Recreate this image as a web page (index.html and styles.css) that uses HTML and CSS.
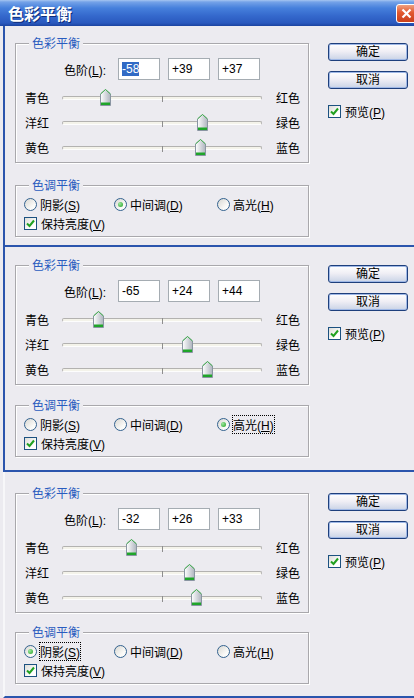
FILE: index.html
```html
<!DOCTYPE html>
<html lang="zh-CN">
<head>
  <meta charset="UTF-8" />
  <title>色彩平衡</title>
  <link rel="stylesheet" href="styles.css">
</head>
<body>
  <svg class="defs" aria-hidden="true">
    <defs>
      <linearGradient id="tg" x1="0" x2="1" y1="0" y2="0">
        <stop offset="0" stop-color="#ffffff"/>
        <stop offset="1" stop-color="#aeb4be"/>
      </linearGradient>
    </defs>
    <symbol id="thumb" viewBox="0 0 11 17">
      <path d="M5.5 0.5 L10.5 5 V16.5 H0.5 V5 Z" fill="url(#tg)" stroke="#8a95a2"/>
      <path d="M0.5 5 L5.5 0.5 L10.5 5" fill="none" stroke="#45b54f"/>
      <rect x="1" y="13.5" width="9" height="2.5" fill="#1fa52a"/>
    </symbol>
    <symbol id="tick" viewBox="0 0 11 11">
      <path d="M2 5.5 L4.5 8 L9 2.5" fill="none" stroke="#21a121" stroke-width="2"/>
    </symbol>
  </svg>

  <div class="titlebar">
    <span>色彩平衡</span>
    <span class="close">
      <svg width="11" height="11" viewBox="0 0 11 11"><path d="M1.5 1.5 L9.5 9.5 M9.5 1.5 L1.5 9.5" stroke="#fff" stroke-width="2.2"/></svg>
    </span>
  </div>

  <!-- dialog 1 -->
  <div class="dialog dialog-1">
    <div class="groups">
      <div class="group color-group">
        <span class="caption">色彩平衡</span>
        <div class="levels">
          <span class="levels-label">色阶(<u>L</u>):</span>
          <span class="field"><span class="sel">-58</span></span>
          <span class="field">+39</span>
          <span class="field">+37</span>
        </div>
        <div class="slider"><span class="name">青色</span><div class="track"><i class="mid"></i><svg class="thumb" style="left:37px"><use href="#thumb"/></svg></div><span class="name-right">红色</span></div>
        <div class="slider"><span class="name">洋红</span><div class="track"><i class="mid"></i><svg class="thumb" style="left:134px"><use href="#thumb"/></svg></div><span class="name-right">绿色</span></div>
        <div class="slider"><span class="name">黄色</span><div class="track"><i class="mid"></i><svg class="thumb" style="left:132px"><use href="#thumb"/></svg></div><span class="name-right">蓝色</span></div>
      </div>
      <div class="group tone-group">
        <span class="caption">色调平衡</span>
        <div class="radios">
          <span class="radio"><i class="dot"></i><span>阴影(<u>S</u>)</span></span>
          <span class="radio"><i class="dot on"></i><span>中间调(<u>D</u>)</span></span>
          <span class="radio"><i class="dot"></i><span>高光(<u>H</u>)</span></span>
        </div>
        <div class="check-row"><span class="box"><svg><use href="#tick"/></svg></span><span>保持亮度(<u>V</u>)</span></div>
      </div>
    </div>
    <div class="side">
      <span class="btn">确定</span>
      <span class="btn">取消</span>
      <div class="check-row preview"><span class="box"><svg><use href="#tick"/></svg></span><span>预览(<u>P</u>)</span></div>
    </div>
  </div>

  <!-- dialog 2 -->
  <div class="dialog dialog-2">
    <div class="groups">
      <div class="group color-group">
        <span class="caption">色彩平衡</span>
        <div class="levels">
          <span class="levels-label">色阶(<u>L</u>):</span>
          <span class="field">-65</span>
          <span class="field">+24</span>
          <span class="field">+44</span>
        </div>
        <div class="slider"><span class="name">青色</span><div class="track"><i class="mid"></i><svg class="thumb" style="left:30px"><use href="#thumb"/></svg></div><span class="name-right">红色</span></div>
        <div class="slider"><span class="name">洋红</span><div class="track"><i class="mid"></i><svg class="thumb" style="left:119px"><use href="#thumb"/></svg></div><span class="name-right">绿色</span></div>
        <div class="slider"><span class="name">黄色</span><div class="track"><i class="mid"></i><svg class="thumb" style="left:139px"><use href="#thumb"/></svg></div><span class="name-right">蓝色</span></div>
      </div>
      <div class="group tone-group">
        <span class="caption">色调平衡</span>
        <div class="radios">
          <span class="radio"><i class="dot"></i><span>阴影(<u>S</u>)</span></span>
          <span class="radio"><i class="dot"></i><span>中间调(<u>D</u>)</span></span>
          <span class="radio"><i class="dot on"></i><span class="focus">高光(<u>H</u>)</span></span>
        </div>
        <div class="check-row"><span class="box"><svg><use href="#tick"/></svg></span><span>保持亮度(<u>V</u>)</span></div>
      </div>
    </div>
    <div class="side">
      <span class="btn">确定</span>
      <span class="btn">取消</span>
      <div class="check-row preview"><span class="box"><svg><use href="#tick"/></svg></span><span>预览(<u>P</u>)</span></div>
    </div>
  </div>

  <!-- dialog 3 -->
  <div class="dialog dialog-3">
    <div class="groups">
      <div class="group color-group">
        <span class="caption">色彩平衡</span>
        <div class="levels">
          <span class="levels-label">色阶(<u>L</u>):</span>
          <span class="field">-32</span>
          <span class="field">+26</span>
          <span class="field">+33</span>
        </div>
        <div class="slider"><span class="name">青色</span><div class="track"><i class="mid"></i><svg class="thumb" style="left:63px"><use href="#thumb"/></svg></div><span class="name-right">红色</span></div>
        <div class="slider"><span class="name">洋红</span><div class="track"><i class="mid"></i><svg class="thumb" style="left:121px"><use href="#thumb"/></svg></div><span class="name-right">绿色</span></div>
        <div class="slider"><span class="name">黄色</span><div class="track"><i class="mid"></i><svg class="thumb" style="left:128px"><use href="#thumb"/></svg></div><span class="name-right">蓝色</span></div>
      </div>
      <div class="group tone-group">
        <span class="caption">色调平衡</span>
        <div class="radios">
          <span class="radio"><i class="dot on"></i><span class="focus">阴影(<u>S</u>)</span></span>
          <span class="radio"><i class="dot"></i><span>中间调(<u>D</u>)</span></span>
          <span class="radio"><i class="dot"></i><span>高光(<u>H</u>)</span></span>
        </div>
        <div class="check-row"><span class="box"><svg><use href="#tick"/></svg></span><span>保持亮度(<u>V</u>)</span></div>
      </div>
    </div>
    <div class="side">
      <span class="btn">确定</span>
      <span class="btn">取消</span>
      <div class="check-row preview"><span class="box"><svg><use href="#tick"/></svg></span><span>预览(<u>P</u>)</span></div>
    </div>
  </div>
</body>
</html>
```

FILE: styles.css
```css
* {
  box-sizing: border-box;
}
body {
  margin: 0;
  width: 414px;
  height: 698px;
  overflow: hidden;
  background: #ecebf0;
  color: #000;
  font: 12px "Liberation Sans", "Noto Sans CJK SC", sans-serif;
  text-autospace: no-autospace;
}
u {
  text-decoration: underline;
}
.defs {
  position: absolute;
  width: 0;
  height: 0;
}

.titlebar {
  display: flex;
  align-items: center;
  height: 26px;
  padding-left: 8px;
  overflow: hidden;
  background: linear-gradient(#a6c5f1 0, #74a2e8 2px, #4680dc 8px, #3468cc 16px, #2a59be 23px, #1b43a0 26px);
  color: #fff;
  font-size: 16px;
  font-weight: bold;
  font-family: "Noto Sans CJK SC", sans-serif;
  text-shadow: 1px 1px 0 #0e2d7a;
}
.close {
  display: flex;
  align-items: center;
  justify-content: center;
  margin-left: auto;
  margin-right: -3px;
  width: 21px;
  height: 19px;
  border: 1px solid #fff;
  border-radius: 3px;
  background: linear-gradient(#f0a080, #e2582e 45%, #c9401c);
}

.dialog {
  display: flex;
  align-items: flex-start;
  margin-left: 3px;
  padding-left: 10px;
  border-left: 2px solid #2b55ad;
  border-bottom: 2px solid #2b55ad;
}
.dialog-1 {
  padding-top: 17px;
  padding-bottom: 8px;
}
.dialog-2 {
  padding-top: 18px;
  padding-bottom: 13px;
}
.dialog-3 {
  padding-top: 21px;
  padding-bottom: 12px;
  border-left-color: #f7f7f9;
}

.groups {
  width: 294px;
}
.group {
  position: relative;
  border: 1px solid #a9a8ac;
  box-shadow: 1px 1px 0 #fff, inset 1px 1px 0 #fff;
}
.caption {
  position: absolute;
  top: -7px;
  left: 13px;
  padding: 0 3px;
  line-height: 14px;
  background: #ecebf0;
  color: #2a5cbf;
}
.color-group {
  height: 120px;
  padding: 14px 0 0 9px;
}
.tone-group {
  height: 52px;
  margin-top: 20px;
  padding: 10px 0 0 8px;
}
.dialog-1 .tone-group {
  margin-top: 22px;
}
.dialog-3 .tone-group {
  margin-top: 19px;
}

.levels {
  display: flex;
  align-items: center;
  gap: 8px;
  height: 22px;
  margin-bottom: 5px;
  padding-left: 39px;
}
.levels-label {
  width: 46px;
}
.field {
  width: 42px;
  height: 22px;
  padding: 0 3px;
  line-height: 20px;
  border: 1px solid #a5acb2;
  background: #fff;
}
.sel {
  background: #316ac5;
  color: #fff;
}

.slider {
  display: flex;
  align-items: center;
  height: 25px;
}
.name {
  width: 37px;
}
.name-right {
  margin-left: 14px;
}
.track {
  position: relative;
  width: 200px;
  height: 4px;
  border: 1px solid #b3b2b0;
  border-bottom-color: #fdfdfd;
  border-radius: 2px;
  background: #f4f3ea;
}
.mid {
  position: absolute;
  left: 99px;
  top: -1px;
  width: 1px;
  height: 6px;
  background: #8e8e8e;
}
.thumb {
  position: absolute;
  top: -8px;
  width: 11px;
  height: 17px;
}

.radios {
  display: grid;
  grid-template-columns: 90px 103px auto;
  align-items: center;
  height: 15px;
}
.radio {
  display: flex;
  align-items: center;
  gap: 3px;
}
.dot {
  position: relative;
  width: 13px;
  height: 13px;
  border: 1px solid #33628f;
  border-radius: 50%;
  background: linear-gradient(135deg, #d8d7d2, #fbfbf9 70%);
}
.dot.on::after {
  content: "";
  position: absolute;
  left: 3px;
  top: 3px;
  width: 5px;
  height: 5px;
  border-radius: 50%;
  background: radial-gradient(circle at 35% 35%, #9de69f, #21a121);
}
.focus {
  outline: 1px dotted #000;
  outline-offset: 0;
}
.check-row {
  display: flex;
  align-items: center;
  gap: 4px;
  height: 15px;
  margin-top: 5px;
}
.box {
  display: flex;
  width: 13px;
  height: 13px;
  border: 1px solid #1c5180;
  background: linear-gradient(135deg, #dcdcd7, #fff 70%);
}
.box svg {
  width: 11px;
  height: 11px;
}

.side {
  display: flex;
  flex-direction: column;
  gap: 10px;
  width: 80px;
  margin-left: 19px;
}
.btn {
  height: 18px;
  line-height: 16px;
  text-align: center;
  border: 1px solid #1e3f7c;
  border-radius: 3px;
  background: linear-gradient(#ffffff, #f0eff5 45%, #c9d3e6);
  box-shadow: inset 0 0 0 1px #9fb8e6;
}
.preview {
  margin-top: 5px;
}
```
